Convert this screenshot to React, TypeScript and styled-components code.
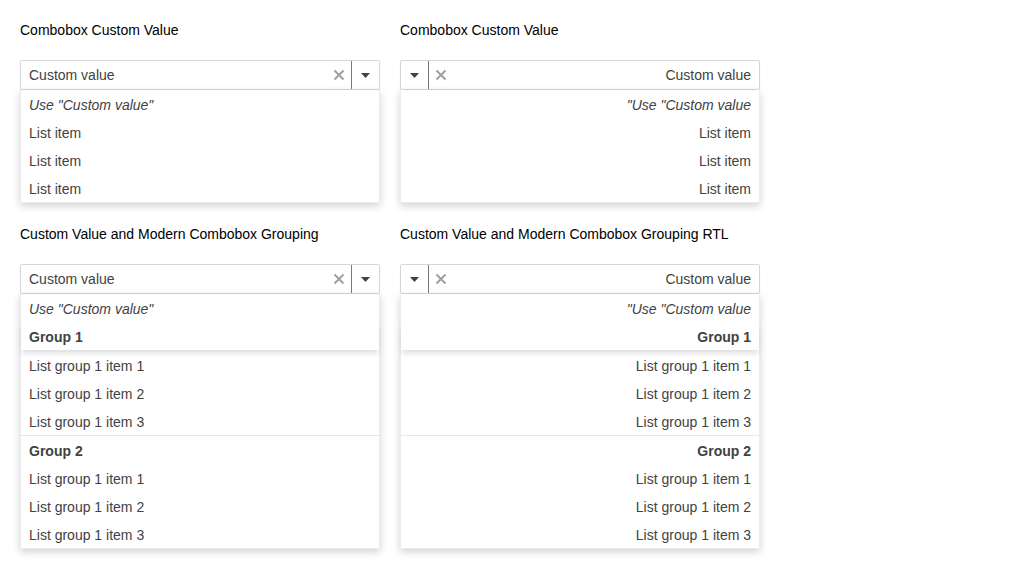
import React from "react";
import styled, { createGlobalStyle, css } from "styled-components";

const Global = createGlobalStyle`
  html, body { margin: 0; padding: 0; background: #fff; }
  body { font-family: "Liberation Sans", Arial, sans-serif; }
`;

const Page = styled.div`
  padding: 20px;
  display: grid;
  grid-template-columns: 360px 360px;
  column-gap: 20px;
  row-gap: 21px;
  align-items: start;
`;

const Section = styled.div`
  display: flex;
  flex-direction: column;
`;

const Label = styled.div`
  font-size: 14px;
  line-height: 20px;
  color: #000;
  margin-bottom: 20px;
`;

const Field = styled.div<{ $rtl?: boolean }>`
  display: flex;
  flex-direction: ${(p) => (p.$rtl ? "row-reverse" : "row")};
  height: 30px;
  box-sizing: border-box;
  border: 1px solid #d6d6d6;
  border-radius: 2px;
  background: #fff;
  box-shadow: 0 1px 2px rgba(0, 0, 0, 0.05);
  align-items: stretch;
`;

const Value = styled.div<{ $rtl?: boolean }>`
  flex: 1;
  font-size: 14px;
  color: #424242;
  display: flex;
  align-items: center;
  justify-content: ${(p) => (p.$rtl ? "flex-end" : "flex-start")};
  padding: 0 8px;
`;

const Clear = styled.span`
  width: 24px;
  display: flex;
  align-items: center;
  justify-content: center;
  color: #a0a0a0;
`;

const ArrowBtn = styled.span<{ $rtl?: boolean }>`
  width: 27px;
  display: flex;
  align-items: center;
  justify-content: center;
  color: #424242;
  ${(p) =>
    p.$rtl
      ? css`border-right: 1px solid #7a7a86;`
      : css`border-left: 1px solid #7a7a86;`}
`;

const Popup = styled.div<{ $rtl?: boolean }>`
  background: #fff;
  border: 1px solid #ececec;
  border-top: none;
  box-shadow: 0 3px 8px rgba(0, 0, 0, 0.18);
  direction: ${(p) => (p.$rtl ? "rtl" : "ltr")};
  font-size: 14px;
  color: #424242;
`;

const Item = styled.div<{ $italic?: boolean }>`
  height: 28px;
  line-height: 30px;
  padding: 0 8px;
  font-style: ${(p) => (p.$italic ? "italic" : "normal")};
`;

const GroupHeader = styled.div<{ $sticky?: boolean }>`
  height: 28px;
  line-height: 30px;
  padding: 0 8px;
  font-weight: bold;
  position: relative;
  ${(p) =>
    p.$sticky
      ? css`
          box-shadow: 0 4px 6px -1px rgba(0, 0, 0, 0.14);
          margin-bottom: 1px;
        `
      : css`
          border-top: 1px solid #e8e8e8;
        `}
`;

const XIcon = () => (
  <svg width="12" height="12" viewBox="0 0 12 12">
    <path d="M1.5 1.5 L10.5 10.5 M10.5 1.5 L1.5 10.5" stroke="currentColor" strokeWidth="2" />
  </svg>
);

const Caret = () => (
  <svg width="9" height="5" viewBox="0 0 9 5">
    <path d="M0 0 H9 L4.5 5 Z" fill="currentColor" />
  </svg>
);

const Combo = ({ rtl }: { rtl?: boolean }) => (
  <Field $rtl={rtl}>
    <Value $rtl={rtl}>Custom value</Value>
    <Clear>
      <XIcon />
    </Clear>
    <ArrowBtn $rtl={rtl}>
      <Caret />
    </ArrowBtn>
  </Field>
);

const Simple = ({ title, rtl }: { title: string; rtl?: boolean }) => (
  <Section>
    <Label>{title}</Label>
    <Combo rtl={rtl} />
    <Popup $rtl={rtl}>
      <Item $italic>Use "Custom value"</Item>
      <Item>List item</Item>
      <Item>List item</Item>
      <Item>List item</Item>
    </Popup>
  </Section>
);

const Grouped = ({ title, rtl }: { title: string; rtl?: boolean }) => (
  <Section>
    <Label>{title}</Label>
    <Combo rtl={rtl} />
    <Popup $rtl={rtl}>
      <Item $italic>Use "Custom value"</Item>
      <GroupHeader $sticky>Group 1</GroupHeader>
      <Item>List group 1 item 1</Item>
      <Item>List group 1 item 2</Item>
      <Item>List group 1 item 3</Item>
      <GroupHeader>Group 2</GroupHeader>
      <Item>List group 1 item 1</Item>
      <Item>List group 1 item 2</Item>
      <Item>List group 1 item 3</Item>
    </Popup>
  </Section>
);

export default function App() {
  return (
    <>
      <Global />
      <Page>
        <Simple title="Combobox Custom Value" />
        <Simple title="Combobox Custom Value" rtl />
        <Grouped title="Custom Value and Modern Combobox Grouping" />
        <Grouped title="Custom Value and Modern Combobox Grouping RTL" rtl />
      </Page>
    </>
  );
}
